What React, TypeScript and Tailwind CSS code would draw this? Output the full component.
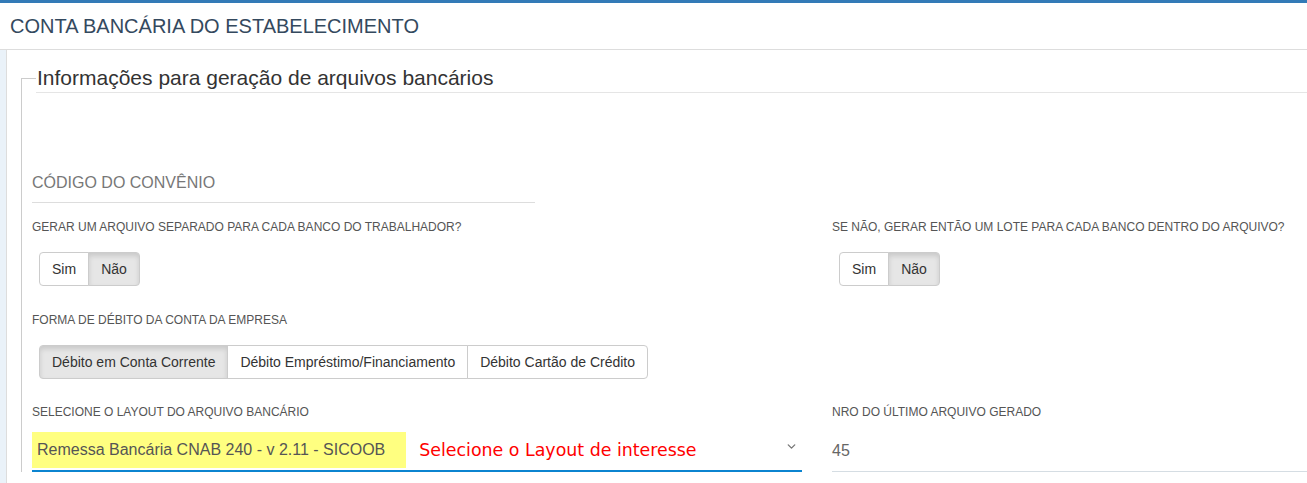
import React from 'react';
import { ChevronDown } from 'lucide-react';

const Label: React.FC<{ children: React.ReactNode }> = ({ children }) => (
  <div className="text-[12px] leading-[16px] text-[#555] uppercase">{children}</div>
);

interface GroupProps {
  options: string[];
  active: number;
}

const ButtonGroup: React.FC<GroupProps> = ({ options, active }) => (
  <div className="inline-flex ml-[7px]">
    {options.map((opt, i) => (
      <button
        key={opt}
        className={
          'h-[34px] px-[12px] text-[14px] text-[#333] border border-[#ccc] ' +
          (i > 0 ? '-ml-px ' : '') +
          (i === 0 ? 'rounded-l-[4px] ' : '') +
          (i === options.length - 1 ? 'rounded-r-[4px] ' : '') +
          (i === active ? 'bg-[#e6e6e6] border-[#adadad] shadow-[inset_0_3px_5px_rgba(0,0,0,0.125)]' : 'bg-white')
        }
      >
        {opt}
      </button>
    ))}
  </div>
);

export default function App() {
  return (
    <div className="w-full h-[483px] overflow-hidden bg-white font-['Liberation_Sans',Arial,sans-serif] border-t-[3px] border-[#337ab7]">
      <div className="h-[47px] flex items-center px-[10px] border-b border-[#ddd] text-[20px] text-[#34495e]">
        CONTA BANCÁRIA DO ESTABELECIMENTO
      </div>

      <div className="flex h-full">
        <div className="w-[7px] shrink-0 bg-[#eaf2f9] border-r border-[#ddd]" />
        <div className="flex-1 pt-[14px] pl-[14px] min-w-0">
          <fieldset className="border-l border-t border-[#ccc] pl-[10px] min-w-0">
            <legend className="ml-[4px] w-[calc(100%-4px)] text-[21px] leading-[28px] text-[#333] border-b border-[#e5e5e5] pl-px">
              Informações para geração de arquivos bancários
            </legend>

            <div className="mt-[80px] w-[503px] border-b border-[#ddd] pb-[9px] text-[16px] leading-[20px] text-[#777]">
              CÓDIGO DO CONVÊNIO
            </div>

            <div className="grid grid-cols-[770px_1fr] gap-x-[30px]">
              <div className="mt-[16px]">
                <Label>Gerar um arquivo separado para cada banco do trabalhador?</Label>
                <div className="mt-[17px]">
                  <ButtonGroup options={['Sim', 'Não']} active={1} />
                </div>
              </div>
              <div className="mt-[16px]">
                <Label>Se não, gerar então um lote para cada banco dentro do arquivo?</Label>
                <div className="mt-[17px]">
                  <ButtonGroup options={['Sim', 'Não']} active={1} />
                </div>
              </div>

              <div className="mt-[26px] col-span-2">
                <Label>Forma de débito da conta da empresa</Label>
                <div className="mt-[17px]">
                  <ButtonGroup
                    options={['Débito em Conta Corrente', 'Débito Empréstimo/Financiamento', 'Débito Cartão de Crédito']}
                    active={0}
                  />
                </div>
              </div>

              <div className="mt-[25px]">
                <Label>Selecione o layout do arquivo bancário</Label>
                <div className="mt-[9px] h-[43px] flex items-center border-b-2 border-[#0b84d0]">
                  <span className="h-[36px] flex items-center pl-[5px] pr-[21px] bg-[#ffff80] text-[16px] text-[#555]">
                    Remessa Bancária CNAB 240 - v 2.11 - SICOOB
                  </span>
                  <span className="ml-[13px] mt-[2px] text-[17.4px] text-[#ff0000] font-['DejaVu_Sans',Verdana,sans-serif]">
                    Selecione o Layout de interesse
                  </span>
                  <ChevronDown className="ml-auto mr-[4px] mb-[6px] text-[#777]" size={13} strokeWidth={2.5} />
                </div>
              </div>
              <div className="mt-[25px]">
                <Label>Nro do último arquivo gerado</Label>
                <div className="mt-[9px] h-[43px] flex items-center pt-[2px] border-b border-[#d5dde3] text-[16px] text-[#666]">
                  45
                </div>
              </div>
            </div>
          </fieldset>
        </div>
      </div>
    </div>
  );
}
